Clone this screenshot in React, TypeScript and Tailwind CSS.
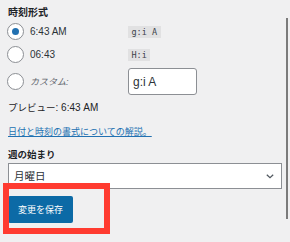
import React from "react";

function Radio({ checked }: { checked?: boolean }) {
  return (
    <span className="flex h-[17px] w-[17px] shrink-0 items-center justify-center rounded-full border border-[#8c8f94] bg-white">
      {checked && <span className="h-[7px] w-[7px] rounded-full bg-[#2271b1]" />}
    </span>
  );
}

function Code({ children }: { children: React.ReactNode }) {
  return (
    <span className="flex h-[12px] items-center bg-[#e1e1e2] px-[3.5px] font-['DejaVu_Sans_Mono',monospace] text-[8.5px] leading-[12px] text-[#3c434a]">
      {children}
    </span>
  );
}

export default function App() {
  return (
    <div className="relative h-[242px] w-[290px] overflow-hidden bg-[#f0f0f1] font-['Liberation_Sans','Noto_Sans_CJK_JP',sans-serif] text-[#2c3338]">
      <div className="flex flex-col pl-[8px] pt-[8px] leading-[10px]">
        <div className="h-[10px] text-[10px] font-bold leading-[10px] text-[#1d2327]">時刻形式</div>

        <div className="ml-[-1px] mt-[5px] flex h-[17px] items-center">
          <div className="flex w-[121px] items-center gap-[6px]">
            <Radio checked />
            <span className="text-[10px] leading-[10px]">6:43 AM</span>
          </div>
          <Code>g:i A</Code>
        </div>

        <div className="ml-[-1px] mt-[6px] flex h-[17px] items-center">
          <div className="flex w-[121px] items-center gap-[6px]">
            <Radio />
            <span className="text-[10px] leading-[10px]">06:43</span>
          </div>
          <Code>H:i</Code>
        </div>

        <div className="ml-[-1px] mt-[5px] flex h-[27px] items-center">
          <div className="flex w-[121px] items-center gap-[6px]">
            <Radio />
            <span className="text-[9px] italic leading-[10px] text-[#646970]">カスタム:</span>
          </div>
          <div className="flex h-[27px] w-[69px] items-center rounded-[3px] border border-[#8c8f94] bg-white pl-[4px] text-[12px] leading-[12px] text-[#2c3338]">
            g:i A
          </div>
        </div>

        <div className="mt-[8px] h-[10px] text-[10px] leading-[10px] text-[#1d2327]">
          <span className="text-[9.5px]">プレビュー</span>: 6:43 AM
        </div>

        <div className="mt-[14px] h-[10px] text-[9px] leading-[10px]">
          <a className="text-[#2271b1] underline">日付と時刻の書式についての解説。</a>
        </div>

        <div className="mt-[13px] h-[10px] text-[9.5px] font-bold leading-[10px] text-[#1d2327]">週の始まり</div>

        <div className="mt-[3px] flex h-[26px] w-[274px] items-center justify-between border border-[#8c8f94] bg-white pl-[5px] pr-[7px] text-[10.5px] leading-[12px] text-[#2c3338]">
          <span>月曜日</span>
          <svg width="8" height="5" viewBox="0 0 8 5" fill="none">
            <path d="M0.8 0.8L4 3.8L7.2 0.8" stroke="#50575e" strokeWidth="1.2" />
          </svg>
        </div>

        <div className="mt-[7px] flex h-[27px] w-[65px] items-center justify-center rounded-[2px] bg-[#0c6aa6] text-[9px] leading-[10px] text-white">
          変更を保存
        </div>
      </div>

      <div className="absolute left-[3px] top-[183px] h-[51px] w-[107px] border-[6px] border-[#ff3b30]" />
      <div className="absolute left-[286px] top-[18px] h-[201px] w-[2px] bg-[#7b7b7b]" />
    </div>
  );
}
